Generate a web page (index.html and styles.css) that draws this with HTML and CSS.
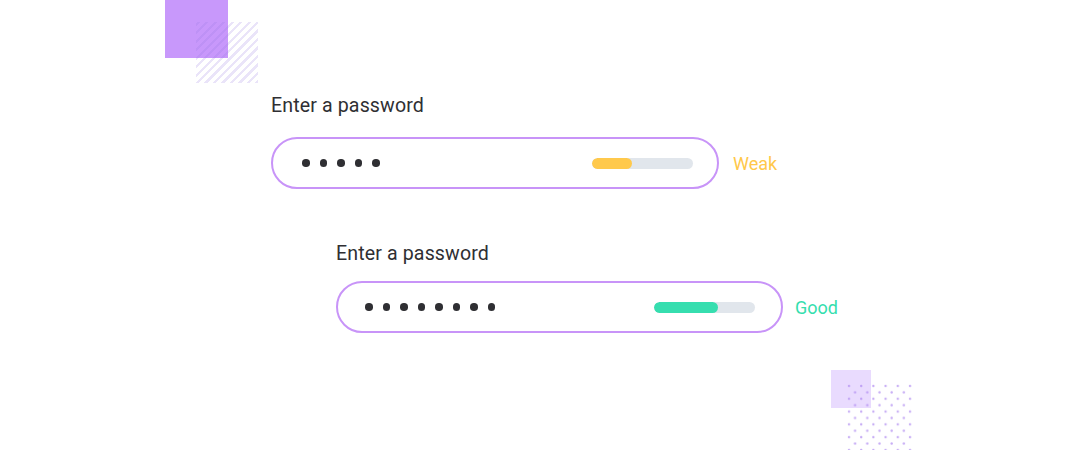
FILE: index.html
```html
<!DOCTYPE html>
<html lang="en">
<head>
<meta charset="utf-8">
<title>Password strength</title>
<link rel="stylesheet" href="styles.css">
</head>
<body>
<div class="stage">
  <div class="deco deco-square"></div>
  <div class="deco deco-hatch"></div>
  <div class="deco deco-soft"></div>
  <svg class="deco deco-dots" width="68" height="70" viewBox="0 0 68 70" aria-hidden="true">
    <defs>
      <pattern id="dotgrid" x="0" y="0" width="12.2" height="12.8" patternUnits="userSpaceOnUse">
        <circle cx="3" cy="3" r="1.2" fill="#b08af2" fill-opacity="0.7"/>
        <circle cx="9.1" cy="9.4" r="1.2" fill="#b08af2" fill-opacity="0.7"/>
      </pattern>
    </defs>
    <rect width="68" height="70" fill="url(#dotgrid)"/>
  </svg>

  <section class="group group-weak">
    <label class="label">Enter a password</label>
    <div class="row">
      <div class="field">
        <div class="dots">
          <span class="dot"></span><span class="dot"></span><span class="dot"></span><span class="dot"></span><span class="dot"></span>
        </div>
        <div class="meter"><div class="meter-fill fill-weak" style="width:40px"></div></div>
      </div>
      <span class="status status-weak">Weak</span>
    </div>
  </section>

  <section class="group group-good">
    <label class="label">Enter a password</label>
    <div class="row">
      <div class="field">
        <div class="dots">
          <span class="dot"></span><span class="dot"></span><span class="dot"></span><span class="dot"></span><span class="dot"></span><span class="dot"></span><span class="dot"></span><span class="dot"></span>
        </div>
        <div class="meter"><div class="meter-fill fill-good" style="width:64px"></div></div>
      </div>
      <span class="status status-good">Good</span>
    </div>
  </section>
</div>
</body>
</html>
```
FILE: styles.css
```css
* { box-sizing: border-box; }
html, body { margin: 0; padding: 0; background: #ffffff; }
body { font-family: Roboto, "Liberation Sans", Arial, sans-serif; color: #2f2f33; }

.stage {
  position: relative;
  width: 1080px;
  height: 450px;
  overflow: hidden;
  padding-top: 94px;
}

.deco { position: absolute; }
.deco-square {
  left: 165px; top: 0;
  width: 63px; height: 58px;
  background: #c898fb;
}
.deco-hatch {
  left: 196px; top: 22px;
  width: 62px; height: 61px;
  background: repeating-linear-gradient(-45deg,
    rgba(150, 120, 225, 0.2) 0 2.2px,
    transparent 2.2px 6px);
}
.deco-soft {
  left: 831px; top: 370px;
  width: 40px; height: 38px;
  background: #e9dbfe;
}
.deco-dots {
  left: 846px; top: 383px;
  display: block;
}

.group { position: relative; display: flex; flex-direction: column; align-items: flex-start; }
.group-weak { margin-left: 271px; }
.group-good { margin-left: 336px; margin-top: 53px; }

.label {
  font-size: 19.6px;
  line-height: 23px;
  letter-spacing: 0.12px;
  color: #2f2f33;
}
.group-weak .label { margin-bottom: 20px; }
.group-good .label { margin-bottom: 16px; }

.row { display: flex; align-items: center; gap: 14px; }
.group-good .row { gap: 12px; }

.field {
  width: 448px;
  height: 52px;
  border: 2px solid #c894f8;
  border-radius: 26px;
  display: flex;
  align-items: center;
  justify-content: space-between;
  padding: 0 24px 0 29px;
}
.group-good .field { width: 447px; padding: 0 26px 0 27px; }

.dots { display: flex; gap: 10px; }
.dot {
  width: 7.5px; height: 7.5px;
  border-radius: 50%;
  background: #2f2f33;
}

.meter {
  width: 101px;
  height: 11px;
  border-radius: 6px;
  background: #e1e6ec;
  overflow: hidden;
}
.meter-fill { height: 100%; border-radius: 6px; }
.fill-weak { background: #ffc94c; }
.fill-good { background: #36deaf; }

.status { font-size: 18px; line-height: 21px; }
.status-weak { color: #ffc84a; }
.status-good { color: #35deae; }
```
